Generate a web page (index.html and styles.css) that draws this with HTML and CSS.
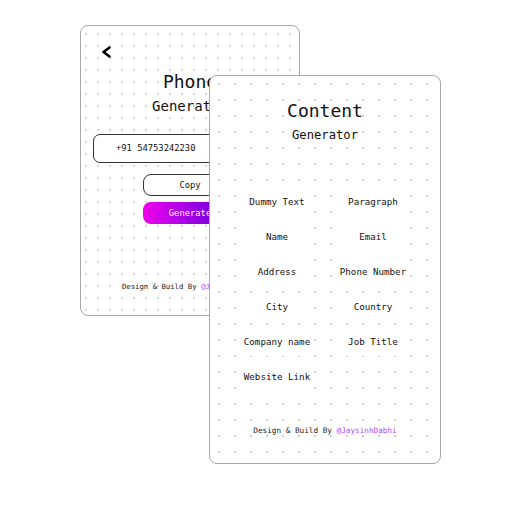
FILE: index.html
```html
<!DOCTYPE html>
<html lang="en">
<head>
    <meta charset="UTF-8">
    <meta name="viewport" content="width=device-width, initial-scale=1.0">
    <title>Content Generator</title>
    <link rel="stylesheet" href="styles.css">
</head>
<body>
    <div class="stage">
        <div class="card card-back">
            <div class="back-arrow">
                <svg width="10" height="12" viewBox="0 0 10 12"><path d="M8.5 1.5 L2.5 6 L8.5 10.5" fill="none" stroke="#000" stroke-width="2.6" stroke-linecap="round" stroke-linejoin="round"/></svg>
            </div>
            <h1 class="back-title">Phone</h1>
            <h2 class="back-sub">Generator</h2>
            <div class="phone-input">+91 54753242230</div>
            <button class="btn btn-copy">Copy</button>
            <button class="btn btn-generate">Generate</button>
            <p class="credit credit-back">Design &amp; Build By <span>@JaysinhDabhi</span></p>
        </div>

        <div class="card card-front">
            <h1 class="front-title">Content</h1>
            <h2 class="front-sub">Generator</h2>
            <div class="options">
                <div class="option">Dummy Text</div>
                <div class="option">Paragraph</div>
                <div class="option">Name</div>
                <div class="option">Email</div>
                <div class="option">Address</div>
                <div class="option">Phone Number</div>
                <div class="option">City</div>
                <div class="option">Country</div>
                <div class="option">Company name</div>
                <div class="option">Job Title</div>
                <div class="option">Website Link</div>
            </div>
            <p class="credit credit-front">Design &amp; Build By <span>@JaysinhDabhi</span></p>
        </div>
    </div>
</body>
</html>
```

FILE: styles.css
```css
body { margin: 0; background: #fff; font-family: 'DejaVu Sans Mono', 'Liberation Mono', monospace; color: #111; }
.stage { position: relative; width: 512px; height: 512px; overflow: hidden; }

.card { position: absolute; box-sizing: border-box; background-color: #fff; border: 1px solid #a8a8a8; display: flex; flex-direction: column; align-items: center; }
.card-back { left: 80px; top: 25px; width: 220px; height: 291px; border-radius: 8px;
    background-image: radial-gradient(circle, #cdcdcd 0.6px, transparent 1.1px);
    background-size: 12px 12px; background-position: 11px 2px; }
.card-front { left: 209px; top: 75px; width: 232px; height: 389px; border-radius: 8px;
    background-image: radial-gradient(circle, #c2c2c2 0.6px, transparent 1.1px);
    background-size: 16px 16px; background-position: 1px 0px; }

/* back card */
.back-arrow { align-self: flex-start; margin: 20px 0 0 20px; height: 12px; line-height: 0; }
.back-title { margin: 13px 0 0; font-size: 18px; font-weight: normal; line-height: 22px; }
.back-sub { margin: 5px 0 0; font-size: 14px; font-weight: normal; line-height: 16px; }
.phone-input { margin-top: 20px; box-sizing: border-box; width: 194px; height: 29px; border: 1px solid #333; border-radius: 7px; background: #fff; font-size: 8.8px; line-height: 27px; padding-left: 22px; }
.btn { box-sizing: border-box; width: 94px; height: 22px; border-radius: 8px; font-family: inherit; font-size: 8.8px; padding: 0; cursor: pointer; }
.btn-copy { margin-top: 11px; background: #fff; border: 1px solid #333; color: #111; }
.btn-generate { margin-top: 6px; border: none; color: #fff; background: linear-gradient(90deg, #f000ec 0%, #a000e6 50%, #5a00d6 100%); }
.credit-back { margin: auto 0 23px; font-size: 7.3px; }

/* front card */
.front-title { margin: 24px 0 0; font-size: 18px; font-weight: normal; line-height: 22px; }
.front-sub { margin: 5px 0 0; font-size: 12.2px; font-weight: normal; line-height: 16px; }
.options { margin-top: 45px; display: grid; grid-template-columns: 74px 74px; gap: 7px 22px; justify-content: center; }
.option { height: 28px; line-height: 28px; text-align: center; background: #fff; font-size: 9.2px; white-space: nowrap; }
.credit-front { margin: auto 0 27px; font-size: 7.7px; }

.credit { line-height: 10px; color: #222; white-space: nowrap; }
.credit span { color: #b04cff; }
```
